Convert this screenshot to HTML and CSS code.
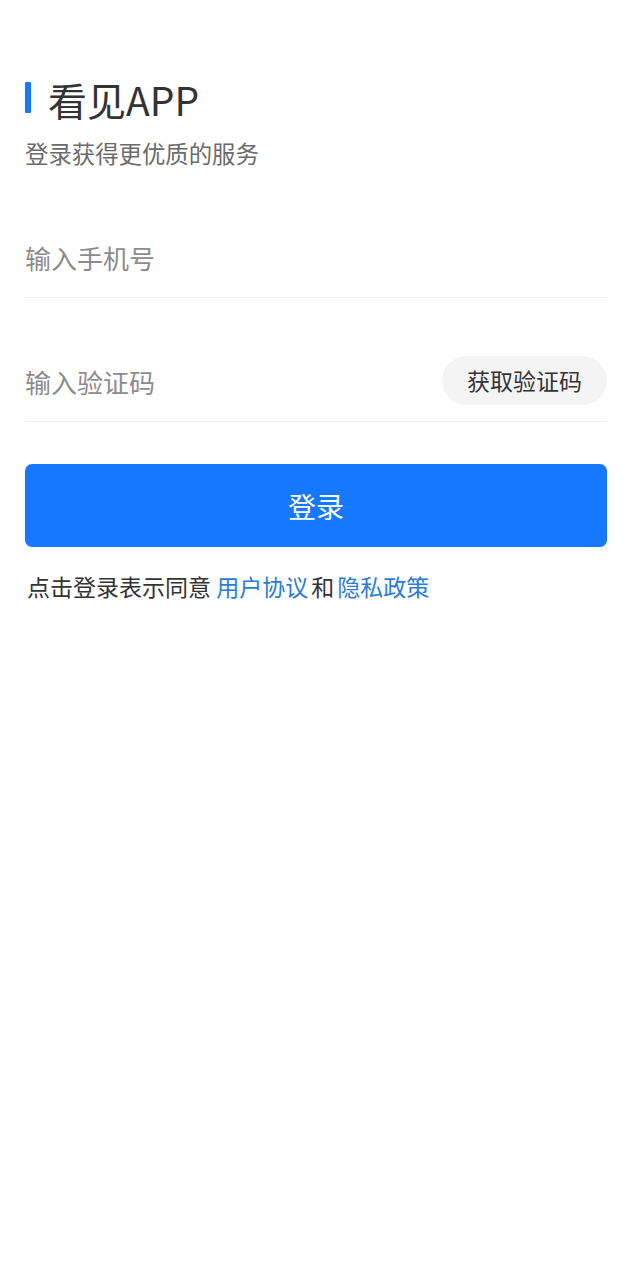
FILE: index.html
```html
<!DOCTYPE html>
<html lang="zh">
<head>
<meta charset="utf-8">
<title>看见APP 登录</title>
<link rel="stylesheet" href="styles.css">
</head>
<body>
<div class="page">
  <div class="title-row">
    <span class="bar"></span>
    <h1 class="title">看见APP</h1>
  </div>
  <p class="subtitle">登录获得更优质的服务</p>

  <div class="field field-phone">
    <span class="placeholder">输入手机号</span>
  </div>
  <div class="field field-code">
    <span class="placeholder">输入验证码</span>
    <span class="code-btn">获取验证码</span>
  </div>

  <div class="login-btn">登录</div>

  <p class="agree">点击登录表示同意 <span class="link">用户协议</span><span class="and">和</span><span class="link">隐私政策</span></p>
</div>
</body>
</html>
```

FILE: styles.css
```css
html, body {
  margin: 0;
  padding: 0;
  background: #ffffff;
}
body {
  font-family: "Noto Sans CJK SC", "Noto Sans", sans-serif;
  color: #333333;
}
.page {
  padding: 76px 23px 0 25px;
}
.title-row {
  display: flex;
  align-items: center;
  height: 46px;
}
.bar {
  width: 6px;
  height: 31px;
  background: #1677ff;
  margin-right: 17px;
  border-radius: 1px;
  margin-top: -3px;
}
.title {
  margin: 0;
  font-size: 39px;
  line-height: 46px;
  font-weight: 400;
  color: #333333;
}
.subtitle {
  margin: 15px 0 0 0;
  font-size: 23.4px;
  line-height: 32px;
  color: #6b6b6b;
}
.field {
  display: flex;
  align-items: center;
  justify-content: space-between;
  height: 79px;
  border-bottom: 1px solid #efefef;
}
.field-phone {
  margin-top: 49px;
}
.field-code {
  margin-top: 44px;
}
.placeholder {
  font-size: 26px;
  color: #8c8c8c;
}
.code-btn {
  display: flex;
  align-items: center;
  justify-content: center;
  width: 165px;
  height: 49px;
  border-radius: 25px;
  background: #f4f4f4;
  font-size: 23px;
  color: #333333;
  margin-top: -3px;
}
.login-btn {
  margin-top: 42px;
  height: 83px;
  border-radius: 7px;
  background: #1677ff;
  color: #ffffff;
  font-size: 28px;
  display: flex;
  align-items: center;
  justify-content: center;
}
.agree {
  margin: 23px 0 0 2px;
  font-size: 23px;
  line-height: 32px;
  color: #333333;
}
.link {
  color: #2a7bd8;
}
.and {
  margin: 0 3px;
}
```
